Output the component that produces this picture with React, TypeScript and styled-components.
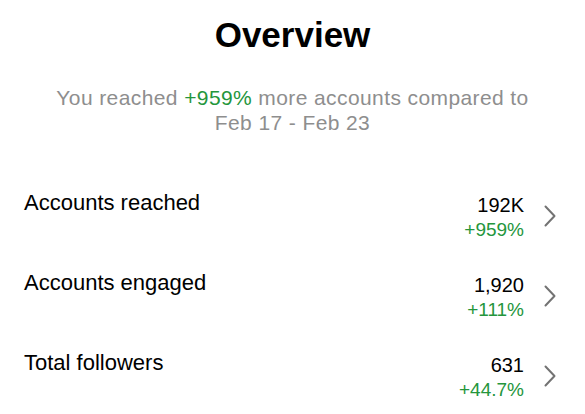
import React from "react";
import styled, { createGlobalStyle } from "styled-components";

const GlobalStyle = createGlobalStyle`
  html, body {
    margin: 0;
    padding: 0;
    background: #ffffff;
  }
  body {
    font-family: "Liberation Sans", Arial, sans-serif;
    -webkit-font-smoothing: antialiased;
  }
`;

const Page = styled.div`
  width: 585px;
  height: 414px;
  overflow: hidden;
  background: #ffffff;
  display: flex;
  flex-direction: column;
  box-sizing: border-box;
  padding-top: 15px;
`;

const Title = styled.h1`
  margin: 0;
  font-size: 35px;
  line-height: 40px;
  font-weight: 700;
  color: #000000;
  text-align: center;
`;

const Subtitle = styled.p`
  margin: 30px 0 0;
  font-size: 21px;
  line-height: 25px;
  letter-spacing: 0.4px;
  color: #8e8e8e;
  text-align: center;
`;

const Green = styled.span`
  color: #24963c;
`;

const List = styled.div`
  margin-top: 55px;
  display: flex;
  flex-direction: column;
`;

const Row = styled.div`
  height: 80px;
  display: flex;
  align-items: flex-start;
  padding: 0 28px 0 24px;
`;

const Label = styled.div`
  flex: 1;
  font-size: 22px;
  line-height: 26px;
  color: #000000;
`;

const Values = styled.div`
  padding-top: 3px;
  display: flex;
  flex-direction: column;
  align-items: flex-end;
`;

const Value = styled.div`
  font-size: 20px;
  line-height: 24px;
  color: #000000;
`;

const Change = styled.div`
  margin-top: 2px;
  font-size: 19px;
  line-height: 22px;
  color: #24963c;
`;

const Chevron = styled.svg`
  margin: 15px 0 0 19px;
  flex: none;
`;

const rows = [
  { label: "Accounts reached", value: "192K", change: "+959%" },
  { label: "Accounts engaged", value: "1,920", change: "+111%" },
  { label: "Total followers", value: "631", change: "+44.7%" },
];

export default function App() {
  return (
    <>
      <GlobalStyle />
      <Page>
        <Title>Overview</Title>
        <Subtitle>
          You reached <Green>+959%</Green> more accounts compared to
          <br />
          Feb 17 - Feb 23
        </Subtitle>
        <List>
          {rows.map((r) => (
            <Row key={r.label}>
              <Label>{r.label}</Label>
              <Values>
                <Value>{r.value}</Value>
                <Change>{r.change}</Change>
              </Values>
              <Chevron width="14" height="22" viewBox="0 0 14 22" fill="none">
                <path
                  d="M2.5 1.5 L11.5 11 L2.5 20.5"
                  stroke="#737373"
                  strokeWidth="2"
                  strokeLinecap="round"
                  strokeLinejoin="round"
                />
              </Chevron>
            </Row>
          ))}
        </List>
      </Page>
    </>
  );
}
